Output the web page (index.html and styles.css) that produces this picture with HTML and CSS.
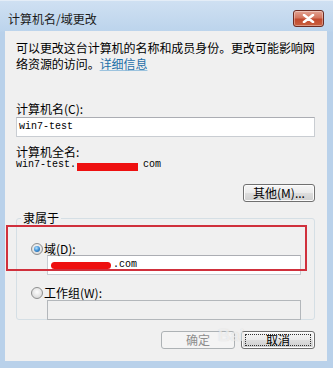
FILE: index.html
```html
<!DOCTYPE html>
<html>
<head>
<meta charset="utf-8">
<link rel="stylesheet" href="styles.css">
</head>
<body>
<div class="window">
  <div class="titlebar">
    <div class="title">计算机名/域更改</div>
    <div class="close"><svg width="13" height="9" viewBox="0 0 13 9"><path d="M2 1 L11 8 M11 1 L2 8" stroke="#fff" stroke-width="2.6" stroke-linecap="round"/></svg></div>
  </div>
  <div class="client">
    <div class="desc">
      <div class="desc-line">可以更改这台计算机的名称和成员身份。更改可能影响网</div>
      <div class="desc-line">络资源的访问。<a class="link">详细信息</a></div>
    </div>
    <div class="label lbl-name">计算机名(C):</div>
    <div class="input">win7-test</div>
    <div class="label lbl-full">计算机全名:</div>
    <div class="mono full">win7-test.<span class="blot blot-full"></span><span class="com">com</span></div>
    <div class="btnrow top-btn"><div class="btn">其他(M)...</div></div>
    <div class="group">
      <div class="legend">隶属于</div>
      <div class="radio-row first"><span class="radio on"></span><span>域(D):</span></div>
      <div class="input sub mono"><span class="blot blot-dom"></span>.com</div>
      <div class="radio-row second"><span class="radio"></span><span>工作组(W):</span></div>
      <div class="input sub disabled"></div>
    </div>
    <div class="btnrow bottom-btns">
      <div class="btn wide disabled-btn">确定</div>
      <div class="btn wide focus"><span class="focusrect">取消</span></div>
    </div>
    <div class="annot"></div>
    <div class="watermark">Bai</div>
  </div>
</div>
</body>
</html>
```
FILE: styles.css
```css
* { box-sizing: border-box; }
html, body { margin: 0; padding: 0; }
body {
  width: 333px;
  height: 368px;
  overflow: hidden;
  font-family: "Noto Sans CJK SC", "Noto Sans", sans-serif;
  font-size: 12px;
  color: #000;
}
.window {
  width: 333px;
  height: 368px;
  background: linear-gradient(#cfe0f2 0px, #bcd4ec 30px, #b9d1ea 31px);
  border-top: 1px solid #e4edf7;
  display: flex;
  flex-direction: column;
}
.titlebar {
  height: 30px;
  display: flex;
  justify-content: space-between;
  align-items: flex-start;
}
.title {
  margin-top: 11px;
  padding-left: 8px;
  line-height: 14px;
  font-size: 12px;
  color: #1a1a1a;
}
.close {
  margin-top: 9px;
  margin-right: 9px;
  width: 31px;
  height: 17px;
  border: 1px solid #6d2b22;
  border-radius: 3px;
  background: linear-gradient(#e3a393 0%, #d4765f 45%, #c24a2f 55%, #c9603f 100%);
  box-shadow: inset 0 0 0 1px rgba(255,255,255,0.35);
  display: flex;
  align-items: center;
  justify-content: center;
}
.client {
  position: relative;
  margin-left: 5px;
  width: 322px;
  height: 330px;
  background: #f0f0f0;
  padding: 9px 12px 0 11px;
}
.desc {
  margin: 0 -3px 0 0;
}
.desc-line {
  line-height: 16px;
  height: 16px;
  white-space: nowrap;
  letter-spacing: -0.05px;
}
.link {
  color: #1e6fa8;
  text-decoration: underline;
  text-decoration-color: #9cc3de;
}
.label { line-height: 13px; }
.lbl-name { margin-top: 30px; }
.lbl-full { margin-top: 8px; }
.input {
  margin-top: 2px;
  height: 20px;
  background: #fff;
  border: 1px solid #c9cdd2;
  border-top-color: #abadb3;
  padding-left: 2px;
  font-family: "Liberation Mono", monospace;
  font-size: 10px;
  line-height: 18px;
  display: flex;
  align-items: center;
}
.mono { font-family: "Liberation Mono", monospace; font-size: 10px; }
.full {
  margin-top: 1px;
  line-height: 12px;
  display: flex;
  align-items: center;
}
.blot {
  display: inline-block;
  background: #ee1010;
}
.blot-full {
  width: 61px;
  height: 8px;
  margin-left: 1px;
  margin-top: 4px;
}
.com { margin-left: 5px; }
.btnrow {
  display: flex;
  justify-content: flex-end;
  gap: 6px;
}
.top-btn { margin-top: 13px; }
.btn {
  width: 72px;
  height: 18px;
  border: 1px solid #707070;
  border-radius: 3px;
  background: linear-gradient(#f6f6f6 0%, #ebebeb 48%, #dddddd 52%, #cfcfcf 100%);
  box-shadow: inset 0 0 0 1px #fcfcfc;
  display: flex;
  align-items: center;
  justify-content: center;
  line-height: 14px;
}
.group {
  margin-top: 16px;
  height: 102px;
  border: 1px solid #d5dfe5;
  border-radius: 3px;
  padding: 0 13px 0 0;
}
.legend {
  display: inline-block;
  margin: -8px 0 0 4px;
  padding: 0 2px;
  background: #f0f0f0;
  line-height: 13px;
  vertical-align: top;
}
.radio-row {
  display: flex;
  align-items: center;
  gap: 1px;
  padding-left: 14px;
  line-height: 13px;
  height: 13px;
}
.radio-row.first { margin-top: 6px; }
.radio-row.second { margin-top: 11px; }
.radio {
  width: 12px;
  height: 12px;
  border-radius: 50%;
  border: 1px solid #8e8f8f;
  background: radial-gradient(circle at 50% 40%, #fdfdfd 0%, #e2e2e2 60%, #cfcfcf 100%);
  position: relative;
}
.radio.on::after {
  content: "";
  position: absolute;
  left: 2px;
  top: 2px;
  width: 6px;
  height: 6px;
  border-radius: 50%;
  background: radial-gradient(circle at 40% 35%, #b9e3ff 0%, #3d8fd4 50%, #1a4f8a 100%);
}
.input.sub { margin-top: 0; margin-left: 30px; padding-left: 3px; }
.input.sub.disabled { margin-top: 1px; background: #f0f0f0; border-color: #b3b7bb; }
.blot-dom {
  width: 60px;
  height: 7px;
  border-radius: 4px;
  margin-right: 2px;
}
.bottom-btns { margin-top: 11px; }
.btn.wide { width: 74px; }
.disabled-btn {
  color: #8d8d8d;
  border-color: #adb2b5;
  background: #f4f4f4;
  box-shadow: none;
}
.focusrect {
  display: flex;
  align-items: center;
  justify-content: center;
  width: 66px;
  height: 12px;
  border: 1px dotted #333;
}
.annot {
  position: absolute;
  left: 1px;
  top: 194px;
  width: 301px;
  height: 46px;
  border: 2px solid #d0303c;
}
.watermark {
  position: absolute;
  left: 213px;
  top: 295px;
  font-family: "Liberation Sans", sans-serif;
  font-weight: bold;
  font-size: 17px;
  color: rgba(255,255,255,0.6);
  text-shadow: 0 0 1px rgba(150,150,150,0.35);
  pointer-events: none;
  white-space: nowrap;
}
```
